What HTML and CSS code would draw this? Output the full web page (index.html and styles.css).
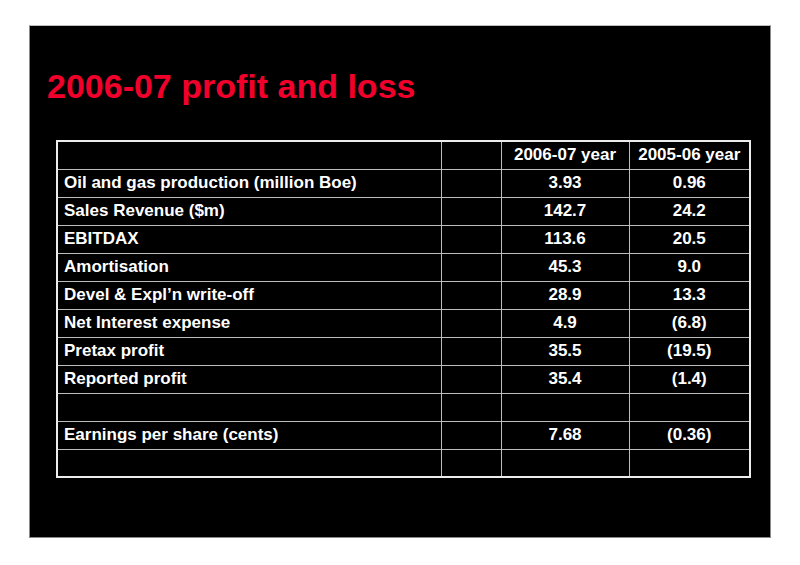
FILE: index.html
```html
<!DOCTYPE html>
<html>
<head>
<meta charset="utf-8">
<link rel="stylesheet" href="styles.css">
</head>
<body>
<div class="slide">
  <h1 class="title">2006-07 profit and loss</h1>
  <table class="pl">
    <colgroup>
      <col class="c1"><col class="c2"><col class="c3"><col class="c4">
    </colgroup>
    <tr><td></td><td></td><td class="num">2006-07 year</td><td class="num">2005-06 year</td></tr>
    <tr><td>Oil and gas production (million Boe)</td><td></td><td class="num">3.93</td><td class="num">0.96</td></tr>
    <tr><td>Sales Revenue ($m)</td><td></td><td class="num">142.7</td><td class="num">24.2</td></tr>
    <tr><td>EBITDAX</td><td></td><td class="num">113.6</td><td class="num">20.5</td></tr>
    <tr><td>Amortisation</td><td></td><td class="num">45.3</td><td class="num">9.0</td></tr>
    <tr><td>Devel &amp; Expl’n write-off</td><td></td><td class="num">28.9</td><td class="num">13.3</td></tr>
    <tr><td>Net Interest expense</td><td></td><td class="num">4.9</td><td class="num">(6.8)</td></tr>
    <tr><td>Pretax profit</td><td></td><td class="num">35.5</td><td class="num">(19.5)</td></tr>
    <tr><td>Reported profit</td><td></td><td class="num">35.4</td><td class="num">(1.4)</td></tr>
    <tr><td></td><td></td><td class="num"></td><td class="num"></td></tr>
    <tr><td>Earnings per share (cents)</td><td></td><td class="num">7.68</td><td class="num">(0.36)</td></tr>
    <tr><td></td><td></td><td class="num"></td><td class="num"></td></tr>
  </table>
</div>
</body>
</html>
```

FILE: styles.css
```css
html, body {
  margin: 0;
  padding: 0;
  background: #ffffff;
}
body {
  padding: 25px 0 0 29px;
}
.slide {
  width: 742px;
  height: 513px;
  background: #000000;
  box-sizing: border-box;
  border: 1px solid #8a8a8a;
  border-top-color: #bdbdbd;
  padding: 40px 0 0 17px;
  font-family: "Liberation Sans", Arial, sans-serif;
}
.title {
  margin: 0 0 34px 0;
  font-size: 34px;
  line-height: 40px;
  font-weight: bold;
  color: #f2002c;
}
.pl {
  margin-left: 9px;
  border-collapse: collapse;
  table-layout: fixed;
  width: 693px;
  border: 2px solid #ececec;
  color: #ffffff;
  font-size: 17px;
  font-weight: bold;
}
.c1 { width: 384px; }
.c2 { width: 60px; }
.c3 { width: 128px; }
.c4 { width: 121px; }
.pl td {
  height: 28px;
  box-sizing: border-box;
  padding: 0 0 0 6px;
  border: 1px solid #bdbdbd;
  line-height: 20px;
  white-space: nowrap;
  vertical-align: middle;
}
.pl td.num {
  text-align: center;
  padding: 0;
}
```
